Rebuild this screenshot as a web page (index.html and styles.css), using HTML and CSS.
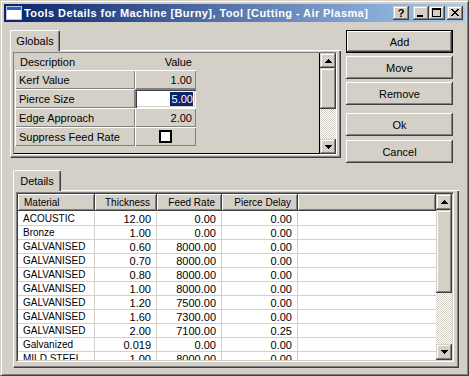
FILE: index.html
```html
<!DOCTYPE html>
<html>
<head>
<meta charset="utf-8">
<link rel="stylesheet" href="styles.css">
</head>
<body>
<div class="window">
  <div class="titlebar">
    <svg class="ticon" width="16" height="14" viewBox="0 0 16 14">
      <rect x="0.5" y="0.5" width="15" height="13" fill="#fff" stroke="#b8c4d8"/>
      <rect x="1" y="1" width="14" height="3" fill="#2a5cb8"/>
    </svg>
    <span class="ttext">Tools Details for Machine [Burny], Tool [Cutting - Air Plasma]</span>
    <div class="tbtns">
      <span class="tbtn help">?</span>
      <span class="tbtn"><svg width="16" height="14" viewBox="0 0 16 14"><rect x="4" y="9" width="6" height="2"/></svg></span>
      <span class="tbtn"><svg width="16" height="14" viewBox="0 0 16 14"><rect x="3" y="2" width="9" height="2"/><rect x="3" y="2" width="1" height="9"/><rect x="11" y="2" width="1" height="9"/><rect x="3" y="10" width="9" height="1"/></svg></span>
      <span class="tbtn close"><svg width="16" height="14" viewBox="0 0 16 14"><rect x="4" y="3" width="2" height="1"/><rect x="10" y="3" width="2" height="1"/><rect x="5" y="4" width="2" height="1"/><rect x="9" y="4" width="2" height="1"/><rect x="6" y="5" width="4" height="1"/><rect x="7" y="6" width="2" height="1"/><rect x="6" y="7" width="4" height="1"/><rect x="5" y="8" width="2" height="1"/><rect x="9" y="8" width="2" height="1"/><rect x="4" y="9" width="2" height="1"/><rect x="10" y="9" width="2" height="1"/></svg></span>
    </div>
  </div>
  <div class="client">
    <div class="toprow">
      <div class="tabctl globals">
        <div class="tabs"><div class="tab">Globals</div><div class="tabfill"></div></div>
        <div class="page">
          <div class="grid">
            <div class="gdata">
              <div class="ghead"><span>Description</span><span>Value</span></div>
              <div class="grow"><div class="gl">Kerf Value</div><div class="gv">1.00</div></div>
              <div class="grow"><div class="gl">Pierce Size</div><div class="gv edit"><span class="sel">5.00</span></div></div>
              <div class="grow"><div class="gl">Edge Approach</div><div class="gv">2.00</div></div>
              <div class="grow"><div class="gl">Suppress Feed Rate</div><div class="gv chk"><span class="checkbox"></span></div></div>
            </div>
            <div class="vscroll gscroll">
              <div class="sb-btn"><svg width="7" height="4" viewBox="0 0 7 4"><rect x="3" y="0" width="1" height="1"/><rect x="2" y="1" width="3" height="1"/><rect x="1" y="2" width="5" height="1"/><rect x="0" y="3" width="7" height="1"/></svg></div>
              <div class="sb-thumb"></div>
              <div class="sb-track"></div>
              <div class="sb-btn"><svg width="7" height="4" viewBox="0 0 7 4"><rect x="0" y="0" width="7" height="1"/><rect x="1" y="1" width="5" height="1"/><rect x="2" y="2" width="3" height="1"/><rect x="3" y="3" width="1" height="1"/></svg></div>
            </div>
          </div>
        </div>
      </div>
      <div class="buttons">
        <div class="btn default">Add</div>
        <div class="btn">Move</div>
        <div class="btn">Remove</div>
        <div class="btn ok">Ok</div>
        <div class="btn cancel">Cancel</div>
      </div>
    </div>
    <div class="tabctl details">
      <div class="tabs"><div class="tab">Details</div><div class="tabfill"></div></div>
      <div class="page">
        <div class="listview">
          <div class="table">
            <div class="lhead">
              <div class="lh">Material</div>
              <div class="lh r">Thickness</div>
              <div class="lh r">Feed Rate</div>
              <div class="lh r">Pierce Delay</div>
              <div class="lh"></div>
            </div>
            <div class="lrows">
              <div class="lrow"><span class="t">ACOUSTIC</span><span class="n">12.00</span><span class="n">0.00</span><span class="n">0.00</span><span></span></div>
              <div class="lrow"><span class="t">Bronze</span><span class="n">1.00</span><span class="n">0.00</span><span class="n">0.00</span><span></span></div>
              <div class="lrow"><span class="t">GALVANISED</span><span class="n">0.60</span><span class="n">8000.00</span><span class="n">0.00</span><span></span></div>
              <div class="lrow"><span class="t">GALVANISED</span><span class="n">0.70</span><span class="n">8000.00</span><span class="n">0.00</span><span></span></div>
              <div class="lrow"><span class="t">GALVANISED</span><span class="n">0.80</span><span class="n">8000.00</span><span class="n">0.00</span><span></span></div>
              <div class="lrow"><span class="t">GALVANISED</span><span class="n">1.00</span><span class="n">8000.00</span><span class="n">0.00</span><span></span></div>
              <div class="lrow"><span class="t">GALVANISED</span><span class="n">1.20</span><span class="n">7500.00</span><span class="n">0.00</span><span></span></div>
              <div class="lrow"><span class="t">GALVANISED</span><span class="n">1.60</span><span class="n">7300.00</span><span class="n">0.00</span><span></span></div>
              <div class="lrow"><span class="t">GALVANISED</span><span class="n">2.00</span><span class="n">7100.00</span><span class="n">0.25</span><span></span></div>
              <div class="lrow"><span class="t">Galvanized</span><span class="n">0.019</span><span class="n">0.00</span><span class="n">0.00</span><span></span></div>
              <div class="lrow"><span class="t">MILD STEEL</span><span class="n">1.00</span><span class="n">8000.00</span><span class="n">0.00</span><span></span></div>
            </div>
          </div>
          <div class="vscroll lscroll">
            <div class="sb-btn"><svg width="7" height="4" viewBox="0 0 7 4"><rect x="3" y="0" width="1" height="1"/><rect x="2" y="1" width="3" height="1"/><rect x="1" y="2" width="5" height="1"/><rect x="0" y="3" width="7" height="1"/></svg></div>
            <div class="sb-thumb"></div>
            <div class="sb-track"></div>
            <div class="sb-btn"><svg width="7" height="4" viewBox="0 0 7 4"><rect x="0" y="0" width="7" height="1"/><rect x="1" y="1" width="5" height="1"/><rect x="2" y="2" width="3" height="1"/><rect x="3" y="3" width="1" height="1"/></svg></div>
          </div>
        </div>
      </div>
    </div>
  </div>
</div>
</body>
</html>
```

FILE: styles.css
```css
* { box-sizing: border-box; margin: 0; padding: 0; }
html, body { background: #d4d0c8; }
body {
  font-family: "Liberation Sans", Arial, sans-serif;
  font-size: 11px;
  color: #000;
  width: 469px;
  height: 376px;
  overflow: hidden;
}
svg { display: block; }

.window {
  width: 469px;
  height: 376px;
  border: 1px solid;
  border-color: #d4d0c8 #404040 #404040 #d4d0c8;
  box-shadow: inset 1px 1px #fff, inset -1px -1px #808080;
  padding: 3px;
  display: flex;
  flex-direction: column;
}

/* title bar */
.titlebar {
  height: 18px;
  flex: none;
  display: flex;
  align-items: center;
  padding: 0 2px;
  background: linear-gradient(to right, #0a246a, #a6caf0);
}
.ticon { flex: none; margin-right: 2px; }
.ttext {
  flex: 1;
  min-width: 0;
  color: #fff;
  font-weight: bold;
  font-size: 11px;
  letter-spacing: 0.42px;
  white-space: nowrap;
  overflow: hidden;
  line-height: 18px;
}
.tbtns { display: flex; flex: none; }
.tbtn {
  width: 16px;
  height: 14px;
  background: #d4d0c8;
  box-shadow: inset -1px -1px #404040, inset 1px 1px #d4d0c8, inset -2px -2px #808080, inset 2px 2px #fff;
  display: flex;
  align-items: center;
  justify-content: center;
}
.tbtn.help { margin-right: 4px; font-weight: bold; font-size: 11px; line-height: 12px; padding-bottom: 1px; }
.tbtn.close { margin-left: 2px; }

/* client */
.client { flex: 1; display: flex; flex-direction: column; }
.toprow { display: flex; align-items: flex-start; margin-top: 8px; padding-left: 6px; }

.tabctl { display: flex; flex-direction: column; }
.tabs { display: flex; height: 21px; flex: none; }
.tab {
  width: 50px;
  display: flex;
  align-items: center;
  justify-content: center;
  border-top: 1px solid #fff;
  border-left: 1px solid #fff;
  border-right: 1px solid #404040;
  box-shadow: inset -1px 0 #808080;
  border-top-left-radius: 2px;
  border-top-right-radius: 2px;
  padding-bottom: 1px;
}
.tabfill { flex: 1; border-bottom: 1px solid #fff; }
.page {
  border-left: 1px solid #fff;
  border-right: 1px solid #404040;
  border-bottom: 1px solid #404040;
  box-shadow: inset -1px -1px #808080;
}

/* globals */
.globals { width: 331px; }
.globals .page { height: 107px; padding: 1px 3px 2px 2px; }
.grid {
  width: 324px;
  height: 103px;
  border: 1px solid;
  border-color: #808080 #fff #fff #808080;
  display: flex;
}
.gdata {
  width: 306px;
  border-right: 1px solid #000;
  border-bottom: 1px solid #000;
  padding-left: 1px;
}
.ghead { display: grid; grid-template-columns: 120px 61px; height: 17px; align-items: center; }
.ghead span:first-child { padding-left: 5px; }
.ghead span:last-child { text-align: right; padding-right: 4px; }
.grow { display: grid; grid-template-columns: 120px 61px; height: 19px; }
.gl, .gv {
  box-shadow: inset 1px 1px #fff, inset -1px -1px #808080;
  display: flex;
  align-items: center;
  white-space: nowrap;
}
.gl { padding-left: 4px; }
.gv { justify-content: flex-end; padding-right: 4px; }
.gv.edit {
  background: #fff;
  box-shadow: inset 1px 1px #808080, inset 2px 2px #404040, inset -1px -1px #fff, inset -2px -2px #d4d0c8;
  padding-right: 3px;
}
.sel { background: #0a246a; color: #fff; line-height: 14px; padding-left: 2px; }
.gv.chk { justify-content: center; padding: 0; }
.checkbox { width: 13px; height: 13px; background: #fff; border: 2px solid #000; }

/* scrollbars */
.vscroll { width: 16px; display: flex; flex-direction: column; flex: none; }
.sb-btn, .sb-thumb {
  background: #d4d0c8;
  box-shadow: inset -1px -1px #404040, inset 1px 1px #d4d0c8, inset -2px -2px #808080, inset 2px 2px #fff;
  flex: none;
}
.sb-btn { display: flex; align-items: center; justify-content: center; }
.sb-track {
  flex: 1;
  background-color: #fff;
  background-image: conic-gradient(#d4d0c8 25%, #fff 0 50%, #d4d0c8 0 75%, #fff 0);
  background-size: 2px 2px;
}
.gscroll .sb-btn { height: 15px; }
.gscroll .sb-thumb { height: 41px; }
.lscroll .sb-btn { height: 16px; }
.lscroll .sb-thumb { height: 83px; }

/* buttons */
.buttons { margin-left: 5px; width: 107px; display: flex; flex-direction: column; }
.btn {
  height: 23px;
  display: flex;
  align-items: center;
  justify-content: center;
  background: #d4d0c8;
  box-shadow: inset -1px -1px #404040, inset 1px 1px #fff, inset -2px -2px #808080;
  margin-top: 3px;
}
.btn.default { margin-top: 0; border: 1px solid #000; }
.btn.ok { margin-top: 8px; }
.btn.cancel { margin-top: 4px; }

/* details */
.details { margin-top: 7px; margin-left: 9px; width: 446px; }
.details .tab { width: 48px; }
.details .page { height: 177px; padding: 1px 4px 5px 2px; }
.listview {
  width: 438px;
  height: 170px;
  border: 1px solid;
  border-color: #808080 #fff #fff #808080;
  box-shadow: inset 1px 1px #404040, inset -1px -1px #d4d0c8;
  padding: 1px;
  display: flex;
}
.table { width: 418px; background: #fff; overflow: hidden; display: flex; flex-direction: column; }
.lhead { display: grid; grid-template-columns: 77px 62px 65px 76px 138px; height: 17px; flex: none; }
.lh {
  background: #d4d0c8;
  box-shadow: inset -1px -1px #404040, inset 1px 1px #fff, inset -2px -2px #808080;
  font-size: 10px;
  display: flex;
  align-items: center;
  padding: 0 7px 1px 6px;
  white-space: nowrap;
}
.lh.r { justify-content: flex-end; }
.lrows { padding-top: 1px; }
.lrow {
  display: grid;
  grid-template-columns: 77px 62px 65px 76px 138px;
  height: 14px;
  border-bottom: 1px solid #d4d0c8;
}
.lrow span {
  border-right: 1px solid #d4d0c8;
  line-height: 12px;
  padding-top: 1px;
  white-space: nowrap;
  overflow: hidden;
}
.lrow span:last-child { border-right: none; }
.lrow .t { font-size: 10px; padding-left: 5px; }
.lrow .n { text-align: right; padding-right: 5px; }
```
